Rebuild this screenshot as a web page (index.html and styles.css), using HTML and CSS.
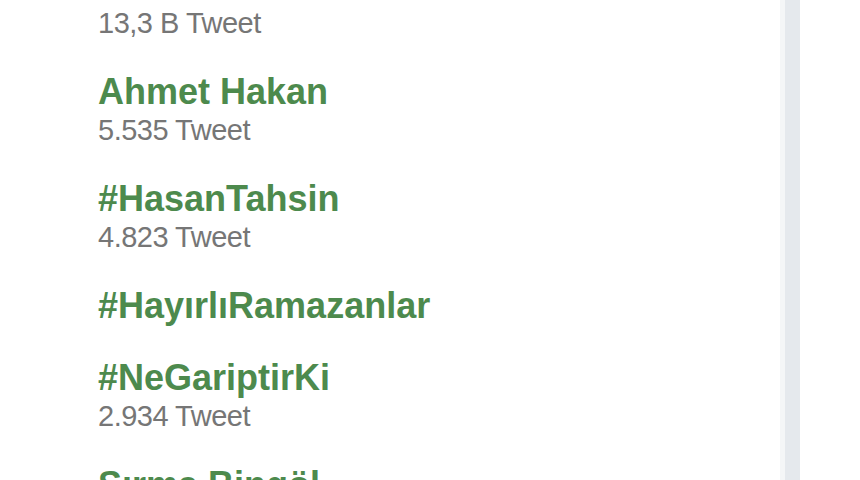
FILE: index.html
```html
<!DOCTYPE html>
<html lang="tr">
<head>
  <meta charset="UTF-8">
  <title>Trendler</title>
  <link rel="stylesheet" href="styles.css">
</head>
<body>
  <div class="page">
    <!-- Trend list -->
    <div class="trends">
      <div class="trend">
        <div class="count">13,3 B Tweet</div>
      </div>
      <div class="trend">
        <div class="name">Ahmet Hakan</div>
        <div class="count">5.535 Tweet</div>
      </div>
      <div class="trend">
        <div class="name">#HasanTahsin</div>
        <div class="count">4.823 Tweet</div>
      </div>
      <div class="trend">
        <div class="name">#HayırlıRamazanlar</div>
      </div>
      <div class="trend">
        <div class="name">#NeGariptirKi</div>
        <div class="count">2.934 Tweet</div>
      </div>
      <div class="trend">
        <div class="name">Sırma Bingöl</div>
      </div>
    </div>

    <div class="divider"></div>
    <div class="gutter"></div>
  </div>
</body>
</html>
```

FILE: styles.css
```css
/* Page layout */
html, body {
  margin: 0;
  padding: 0;
  height: 100%;
  background-color: #fff;
  overflow: hidden;
}

.page {
  display: flex;
  height: 100%;
}

.trends {
  flex: 1;
  padding: 6px 0 0 98px;
  display: flex;
  flex-direction: column;
  gap: 30px;
  font-family: "Liberation Sans", Arial, sans-serif;
  border-right: 5px solid #f4f6f7;
}

.trend .name {
  font-size: 36px;
  line-height: 42px;
  font-weight: bold;
  color: #4d8a4d;
  white-space: nowrap;
}

.trend .count {
  font-size: 29px;
  line-height: 35px;
  color: #767676;
  letter-spacing: -0.5px;
}

.divider {
  width: 15px;
  background-color: #e5e9ed;
}

.gutter {
  width: 60px;
}
```
